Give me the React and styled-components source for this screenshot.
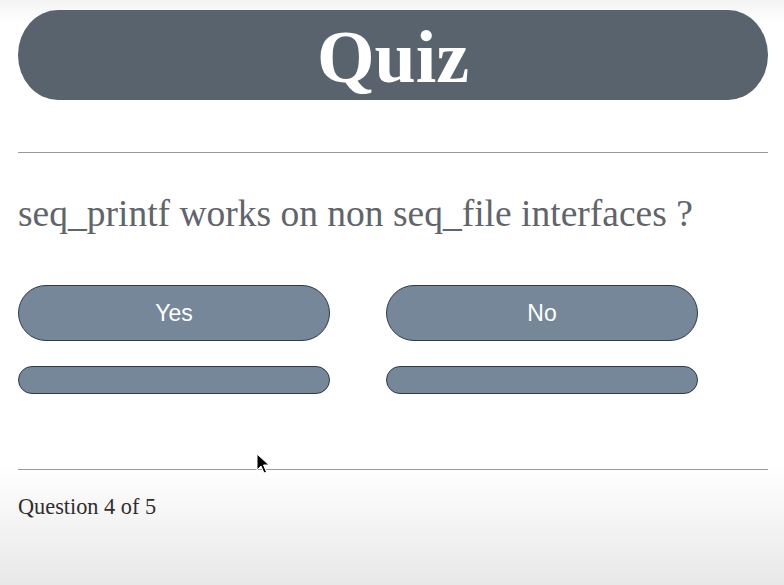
import React from "react";
import styled, { createGlobalStyle } from "styled-components";

const Global = createGlobalStyle`
  html, body { margin: 0; padding: 0; }
  body {
    min-height: 585px;
    background: linear-gradient(to bottom, #f3f3f3 0px, #ffffff 22px, #ffffff 465px, #e8e8e8 585px);
    font-family: "Liberation Serif", "Times New Roman", serif;
  }
`;

const Page = styled.div`
  position: relative;
  padding: 10px 16px 0 18px;
  min-height: 575px;
`;

const Header = styled.header`
  height: 90px;
  border-radius: 40px / 45px;
  background: #59636e;
  display: flex;
  align-items: center;
  justify-content: center;
`;

const Title = styled.h1`
  margin: 0;
  color: #ffffff;
  font-family: "Liberation Serif", "Times New Roman", serif;
  font-weight: bold;
  font-size: 74px;
  line-height: 1;
  transform: translateY(2px);
`;

const Rule = styled.hr`
  margin: ${(p) => p.$top}px 0 0 0;
  border: none;
  height: 1px;
  background: #9a9a9a;
`;

const Question = styled.p`
  margin: 40px 0 0 0;
  font-size: 37.5px;
  line-height: 42px;
  color: #60646b;
  white-space: nowrap;
`;

const Answers = styled.div`
  margin-top: 50px;
  display: grid;
  grid-template-columns: 312px 312px;
  column-gap: 56px;
  row-gap: 25px;
`;

const Answer = styled.button`
  box-sizing: border-box;
  height: ${(p) => (p.$tall ? 56 : 28)}px;
  border: 1px solid #2f3a4a;
  border-radius: 28px;
  background: #77879a;
  color: #ffffff;
  font-family: "Liberation Sans", Arial, sans-serif;
  font-size: 23px;
  padding: 0;
  cursor: pointer;
`;

const Footer = styled.p`
  margin: 24px 0 0 0;
  font-size: 22.3px;
  line-height: 26px;
  color: #2e2e2e;
`;

const Pointer = styled.svg`
  position: absolute;
  left: 256px;
  top: 453px;
`;

export default function App() {
  return (
    <>
      <Global />
      <Page>
        <Header>
          <Title>Quiz</Title>
        </Header>
        <Rule $top={52} />
        <Question>seq_printf works on non seq_file interfaces ?</Question>
        <Answers>
          <Answer $tall>Yes</Answer>
          <Answer $tall>No</Answer>
          <Answer aria-label="empty answer" />
          <Answer aria-label="empty answer" />
        </Answers>
        <Rule $top={75} />
        <Footer>Question 4 of 5</Footer>
        <Pointer width="15" height="22" viewBox="0 0 15 22">
          <path d="M1 1 L1 17 L5 13 L8 20 L10.5 19 L7.5 12 L13 12 Z" fill="#000" stroke="#fff" strokeWidth="1" />
        </Pointer>
      </Page>
    </>
  );
}
